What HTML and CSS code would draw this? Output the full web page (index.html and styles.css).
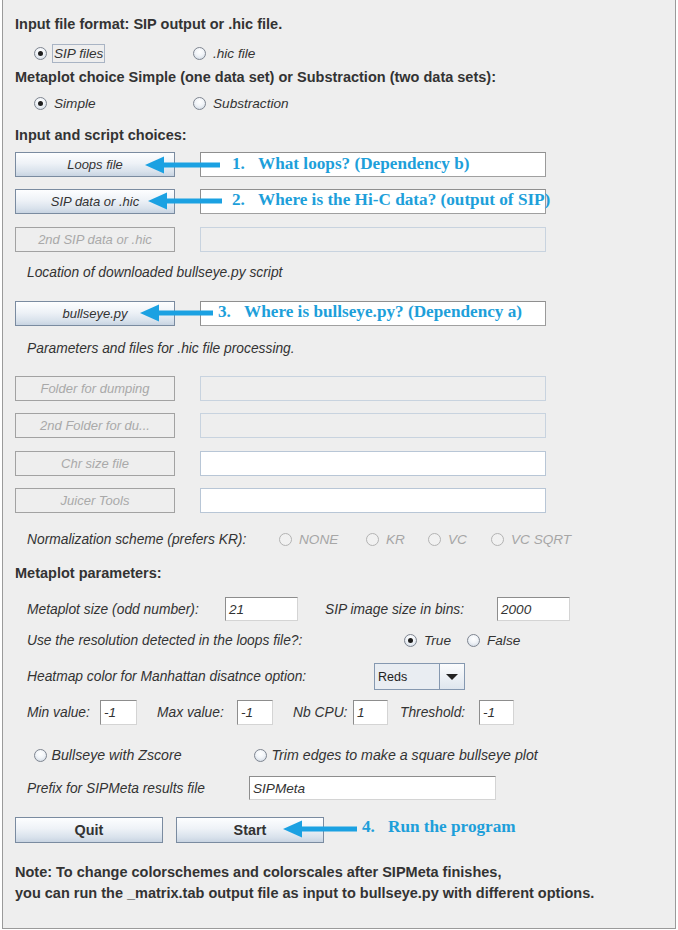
FILE: index.html
```html
<!DOCTYPE html>
<html>
<head>
<meta charset="utf-8">
<title>SIPMeta</title>
<link rel="stylesheet" href="styles.css">
</head>
<body>
<div class="frame">
  <div class="row h">Input file format: SIP output or .hic file.</div>
  <div class="row g9">
    <label class="opt w159"><span class="radio on"></span><span class="txt focus">SIP files</span></label>
    <label class="opt"><span class="radio"></span><span class="txt">.hic file</span></label>
  </div>
  <div class="row h g4">Metaplot choice Simple (one data set) or Substraction (two data sets):</div>
  <div class="row g6">
    <label class="opt w159"><span class="radio on"></span><span class="txt">Simple</span></label>
    <label class="opt"><span class="radio"></span><span class="txt">Substraction</span></label>
  </div>
  <div class="row h g12">Input and script choices:</div>

  <div class="row tall g7"><button class="btn">Loops file</button><div class="field note-field"></div></div>
  <div class="row tall g12"><button class="btn">SIP data or .hic</button><div class="field note-field"></div></div>
  <div class="row tall g13"><button class="btn dis">2nd SIP data or .hic</button><div class="field dis"></div></div>
  <div class="row lbl g10">Location of downloaded bullseye.py script</div>
  <div class="row tall g19"><button class="btn">bullseye.py</button><div class="field note-field"></div></div>
  <div class="row lbl g12">Parameters and files for .hic file processing.</div>
  <div class="row tall g18"><button class="btn dis">Folder for dumping</button><div class="field dis"></div></div>
  <div class="row tall g12"><button class="btn dis">2nd Folder for du...</button><div class="field dis"></div></div>
  <div class="row tall g13"><button class="btn dis">Chr size file</button><div class="field"></div></div>
  <div class="row tall g12"><button class="btn dis">Juicer Tools</button><div class="field"></div></div>

  <div class="row lbl g16">
    <span class="cell w251">Normalization scheme (prefers KR):</span>
    <label class="opt dis w87"><span class="radio"></span><span class="txt">NONE</span></label>
    <label class="opt dis w62"><span class="radio"></span><span class="txt">KR</span></label>
    <label class="opt dis w63"><span class="radio"></span><span class="txt">VC</span></label>
    <label class="opt dis"><span class="radio"></span><span class="txt">VC SQRT</span></label>
  </div>

  <div class="row h g14">Metaplot parameters:</div>
  <div class="row lbl mid g14">
    <span class="cell w198">Metaplot size (odd number):</span>
    <span class="num w73">21</span>
    <span class="cell w172 ml27">SIP image size in bins:</span>
    <span class="num w73">2000</span>
  </div>
  <div class="row lbl g9">
    <span class="cell w376">Use the resolution detected in the loops file?:</span>
    <label class="opt w63"><span class="radio on"></span><span class="txt">True</span></label>
    <label class="opt"><span class="radio"></span><span class="txt">False</span></label>
  </div>
  <div class="row lbl combo-row g13">
    <span class="cell w347">Heatmap color for Manhattan disatnce option:</span>
    <div class="combo"><span class="combo-val">Reds</span><span class="combo-btn"><span class="tri"></span></span></div>
  </div>
  <div class="row lbl tall g10">
    <span class="cell w73">Min value:</span><span class="num w37">-1</span>
    <span class="cell w80 ml20">Max value:</span><span class="num w36">-1</span>
    <span class="cell w60 ml20">Nb CPU:</span><span class="num w35">1</span>
    <span class="cell w79 ml12">Threshold:</span><span class="num w35">-1</span>
  </div>
  <div class="row g20">
    <label class="opt w220"><span class="radio"></span><span class="txt tight">Bullseye with Zscore</span></label>
    <label class="opt"><span class="radio"></span><span class="txt tight">Trim edges to make a square bullseye plot</span></label>
  </div>
  <div class="row lbl mid g11">
    <span class="cell w222">Prefix for SIPMeta results file</span>
    <span class="num w247">SIPMeta</span>
  </div>
  <div class="row big g17">
    <button class="btn main">Quit</button>
    <button class="btn main ml13">Start</button>
  </div>
  <p class="note">Note: To change colorschemes and colorscales after SIPMeta finishes,<br>you can run the _matrix.tab output file as input to bullseye.py with different options.</p>

  <div class="overlay">
    <svg class="arrows" width="678" height="930" viewBox="0 0 678 930">
      <g fill="#1ba1e2">
        <polygon points="145,165 164,156.5 164,173.5"/><rect x="162" y="162.5" width="58" height="5"/>
        <polygon points="148,201 167,192.5 167,209.5"/><rect x="165" y="198.5" width="57" height="5"/>
        <polygon points="140,313 159,304.5 159,321.5"/><rect x="157" y="310.5" width="56" height="5"/>
        <polygon points="283,829 302,820.5 302,837.5"/><rect x="300" y="826.5" width="57" height="5"/>
      </g>
    </svg>
    <div class="ann a1"><span class="n">1.</span>What loops? (Dependency b)</div>
    <div class="ann a2"><span class="n">2.</span>Where is the Hi-C data? (output of SIP)</div>
    <div class="ann a3"><span class="n">3.</span>Where is bullseye.py? (Dependency a)</div>
    <div class="ann a4"><span class="n">4.</span>Run the program</div>
  </div>
</div>
</body>
</html>
```

FILE: styles.css
```css
* { box-sizing: border-box; }
html, body { margin: 0; padding: 0; background: #ffffff; }
body {
  width: 678px;
  height: 930px;
  overflow: hidden;
  font-family: "Liberation Sans", Arial, sans-serif;
  color: #333333;
}
.frame {
  position: relative;
  margin-left: 2px;
  width: 674px;
  height: 929px;
  border: 1px solid #9a9a9a;
  border-top: none;
  background: #eeeeee;
  padding: 14px 0 0 12px;
}
.row { display: flex; align-items: center; height: 20px; white-space: nowrap; }
.row.tall { height: 25px; }
.row.mid { height: 24px; }
.row.big { height: 26px; }
.row.combo-row { height: 27px; }
.h { font-weight: bold; font-size: 14.5px; }
.lbl { font-style: italic; font-size: 13.8px; padding-left: 12px; }

/* radio buttons */
.opt { display: inline-flex; align-items: center; flex: none; font-style: italic; font-size: 13.6px; color: #333; }
.row > .opt:first-child { margin-left: 18.5px; }
.radio {
  width: 13px; height: 13px; border-radius: 50%;
  border: 1px solid #7e8590;
  background: radial-gradient(circle at 50% 35%, #ffffff 0%, #f1f4f8 45%, #c9d3df 100%);
  position: relative; flex: none;
}
.radio.on::after {
  content: ""; position: absolute; left: 3px; top: 3px; width: 5px; height: 5px;
  border-radius: 50%; background: #1e1e1e;
}
.txt { margin-left: 5.5px; padding: 1px; border: 1px solid transparent; line-height: 15px; }
.txt.tight { margin-left: 3px; font-size: 14.2px; }
.txt.focus { border-color: #a9b4c4; }
.opt.dis { color: #a6a6a6; }
.opt.dis .radio { border-color: #b3b3b3; background: #f1f1f1; }

/* buttons */
.btn {
  flex: none;
  width: 160px; height: 25px; margin: 0; padding: 0;
  border: 1px solid #7a8ba0;
  background: linear-gradient(#fdfeff 0%, #eef2f7 45%, #d9e2ec 80%, #c8d4e2 100%);
  font-family: "Liberation Sans", Arial, sans-serif;
  font-style: italic; font-size: 13px; color: #333;
}
.btn.dis { background: #eeeeee; border-color: #a2a2a2; color: #a9a9a9; }
.btn.main { width: 148px; height: 26px; font-style: normal; font-weight: bold; font-size: 14.4px; }

/* text fields */
.field {
  flex: none; margin-left: 25px; width: 346px; height: 25px;
  background: #ffffff; border: 1px solid #b8c6d6;
}
.field.dis { background: #eeeeee; border-color: #c8d3df; }
.field.note-field { border-color: #8f8f8f #9a9a9a #a0a0a0 #8f8f8f; }
.num {
  flex: none; display: flex; align-items: center;
  height: 100%; padding-left: 3px;
  background: #ffffff;
  border: 1px solid; border-color: #8d8d8d #d4d4d4 #d4d4d4 #8d8d8d;
  font-style: italic; font-size: 13.6px; color: #333;
}

/* combo */
.combo {
  flex: none; display: flex; width: 91px; height: 27px;
  border: 1px solid #8598b0; background: #e9edf2;
}
.combo-val { flex: 1; display: flex; align-items: center; padding-left: 3px; font-style: normal; font-size: 12.5px; color: #222; }
.combo-btn {
  width: 25px; display: flex; align-items: center; justify-content: center;
  border-left: 1px solid #8598b0;
  background: linear-gradient(#fbfcfd, #dfe6ee);
}
.tri { width: 0; height: 0; border-left: 6px solid transparent; border-right: 6px solid transparent; border-top: 6px solid #222; }

.note {
  margin: 19px 0 0 0; font-weight: bold; font-size: 14.5px; line-height: 21px; color: #333;
}

/* utilities (after components so they win) */
.cell { display: inline-block; flex: none; }
.ml12 { margin-left: 12px; } .ml13 { margin-left: 13px; } .ml20 { margin-left: 20px; } .ml27 { margin-left: 27px; }
.w35 { width: 35px; } .w36 { width: 36px; } .w37 { width: 37px; } .w60 { width: 60px; }
.w62 { width: 62px; } .w63 { width: 63px; } .w73 { width: 73px; } .w79 { width: 79px; }
.w80 { width: 80px; } .w87 { width: 87px; } .w159 { width: 159px; } .w172 { width: 172px; }
.w198 { width: 198px; } .w220 { width: 220px; } .w222 { width: 222px; } .w247 { width: 247px; }
.w251 { width: 251.5px; } .w347 { width: 347px; } .w376 { width: 376.5px; }
.g4 { margin-top: 4px; } .g6 { margin-top: 6px; } .g7 { margin-top: 7px; }
.g9 { margin-top: 9px; } .g10 { margin-top: 10px; } .g11 { margin-top: 11px; }
.g12 { margin-top: 12px; } .g13 { margin-top: 13px; } .g14 { margin-top: 14px; }
.g16 { margin-top: 16px; } .g17 { margin-top: 17px; } .g18 { margin-top: 18px; }
.g19 { margin-top: 19px; } .g20 { margin-top: 20px; }

/* annotation overlay */
.overlay { position: absolute; left: -3px; top: 0; width: 678px; height: 930px; pointer-events: none; }
.arrows { position: absolute; left: 0; top: 0; }
.ann {
  position: absolute; white-space: nowrap;
  font-family: "Liberation Serif", "Times New Roman", serif;
  font-weight: bold; font-size: 17.2px; line-height: 20px; color: #1e9fda;
}
.ann .n { display: inline-block; width: 26px; }
.a1 { left: 232px; top: 154px; }
.a2 { left: 232px; top: 190px; }
.a3 { left: 218px; top: 302px; }
.a4 { left: 362px; top: 817px; }
```
